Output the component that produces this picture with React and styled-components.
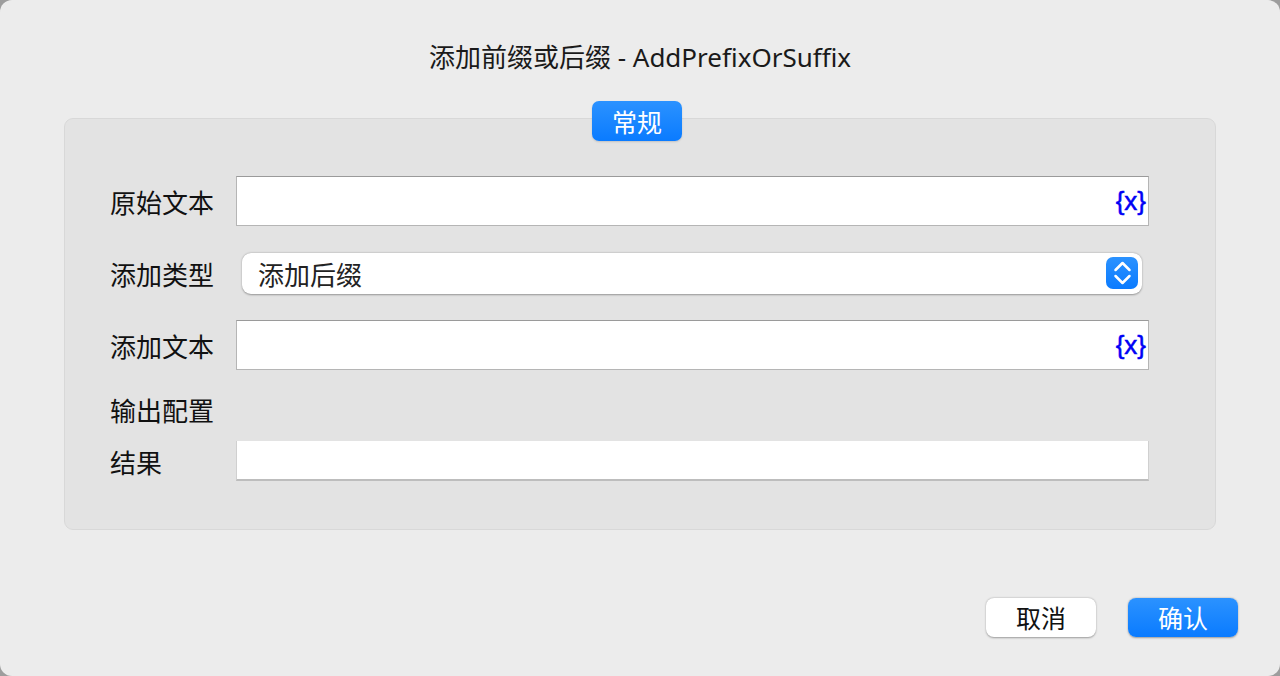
import React from "react";
import styled, { createGlobalStyle } from "styled-components";

const GlobalStyle = createGlobalStyle`
  html, body {
    margin: 0;
    padding: 0;
    background: #9d9d9d;
  }
  body {
    font-family: "Noto Sans CJK SC", "Noto Sans", sans-serif;
    color: #111;
  }
`;

const fields = [
  { label: "原始文本", type: "input" },
  { label: "添加类型", type: "select", value: "添加后缀" },
  { label: "添加文本", type: "input" },
];

const App = () => {
  return (
    <>
      <GlobalStyle />
      <Window>
        <Title>添加前缀或后缀 - AddPrefixOrSuffix</Title>
        <Group>
          <TabBadge>常规</TabBadge>
          {fields.map((field) => (
            <Row key={field.label}>
              <Label>{field.label}</Label>
              {field.type === "select" ? (
                <Select>
                  <span>{field.value}</span>
                  <Stepper>
                    <svg width="21" height="28" viewBox="0 0 21 28" fill="none">
                      <path
                        d="M3.5 11 L10.5 4 L17.5 11"
                        stroke="#fff"
                        strokeWidth="2.5"
                        strokeLinecap="round"
                        strokeLinejoin="round"
                      />
                      <path
                        d="M3.5 17 L10.5 24 L17.5 17"
                        stroke="#fff"
                        strokeWidth="2.5"
                        strokeLinecap="round"
                        strokeLinejoin="round"
                      />
                    </svg>
                  </Stepper>
                </Select>
              ) : (
                <TextInput>
                  <VarTag>{"{x}"}</VarTag>
                </TextInput>
              )}
            </Row>
          ))}
          <SectionLabel>输出配置</SectionLabel>
          <Row $compact>
            <Label>结果</Label>
            <ResultInput />
          </Row>
        </Group>
        <Footer>
          <Button>取消</Button>
          <Button $primary>确认</Button>
        </Footer>
      </Window>
    </>
  );
};

const Window = styled.div`
  box-sizing: border-box;
  width: 1280px;
  height: 676px;
  background: #ececec;
  border-radius: 12px;
  display: flex;
  flex-direction: column;
  overflow: hidden;
`;

const Title = styled.div`
  margin-top: 40px;
  height: 34px;
  line-height: 34px;
  text-align: center;
  font-family: "Noto Sans", "Noto Sans CJK SC", sans-serif;
  font-size: 26px;
  color: #1a1a1a;
`;

const Group = styled.div`
  position: relative;
  box-sizing: border-box;
  margin: 44px 64px 0 64px;
  width: 1152px;
  height: 412px;
  padding: 57px 66px 0 45px;
  background: #e3e3e3;
  border: 1px solid #d8d8d8;
  border-radius: 9px;
`;

const TabBadge = styled.div`
  position: absolute;
  top: -18px;
  left: 527px;
  width: 90px;
  height: 40px;
  border-radius: 7px;
  background: linear-gradient(#2b92ff, #0a7bff);
  color: #fff;
  font-size: 25px;
  line-height: 40px;
  text-align: center;
  box-shadow: 0 1px 2px rgba(0, 0, 0, 0.15);
`;

const Row = styled.div`
  display: flex;
  align-items: center;
  height: ${(props) => (props.$compact ? "40px" : "50px")};
  margin-bottom: 22px;
`;

const Label = styled.div`
  width: 126px;
  flex-shrink: 0;
  font-size: 26px;
  color: #111;
`;

const TextInput = styled.div`
  box-sizing: border-box;
  flex: 1;
  height: 50px;
  background: #fff;
  border: 1px solid #b5b5b5;
  border-top-color: #9a9a9a;
  display: flex;
  align-items: center;
  justify-content: flex-end;
  padding-right: 2px;
`;

const VarTag = styled.span`
  color: #0000f5;
  font-family: "Liberation Sans", "Noto Sans", sans-serif;
  font-size: 26px;
  line-height: 30px;
  -webkit-text-stroke: 0.5px #0000f5;
`;

const Select = styled.div`
  box-sizing: border-box;
  flex: 1;
  margin-left: 6px;
  margin-right: 7px;
  height: 41px;
  background: #fff;
  border-radius: 9px;
  box-shadow: 0 0.5px 2px rgba(0, 0, 0, 0.35);
  display: flex;
  align-items: center;
  justify-content: space-between;
  padding: 0 4px 0 16px;
  font-size: 26px;
  color: #222;
`;

const Stepper = styled.div`
  width: 32px;
  height: 32px;
  border-radius: 7px;
  background: linear-gradient(#2b92ff, #0a7bff);
  display: flex;
  align-items: center;
  justify-content: center;
`;

const SectionLabel = styled.div`
  font-size: 26px;
  height: 36px;
  line-height: 36px;
  margin-bottom: 13px;
  color: #111;
`;

const ResultInput = styled.div`
  box-sizing: border-box;
  flex: 1;
  height: 40px;
  background: #fff;
  border-bottom: 2px solid #bdbdbd;
  border-right: 1px solid #d0d0d0;
  border-left: 1px solid #d0d0d0;
`;

const Footer = styled.div`
  display: flex;
  justify-content: flex-end;
  gap: 32px;
  margin-top: 68px;
  padding-right: 42px;
`;

const Button = styled.div`
  width: 110px;
  height: 39px;
  border-radius: 8px;
  font-size: 25px;
  line-height: 39px;
  text-align: center;
  background: ${(props) =>
    props.$primary ? "linear-gradient(#2b92ff, #0a7bff)" : "#fff"};
  color: ${(props) => (props.$primary ? "#fff" : "#111")};
  box-shadow: 0 0.5px 2px rgba(0, 0, 0, 0.35);
`;

export default App;
